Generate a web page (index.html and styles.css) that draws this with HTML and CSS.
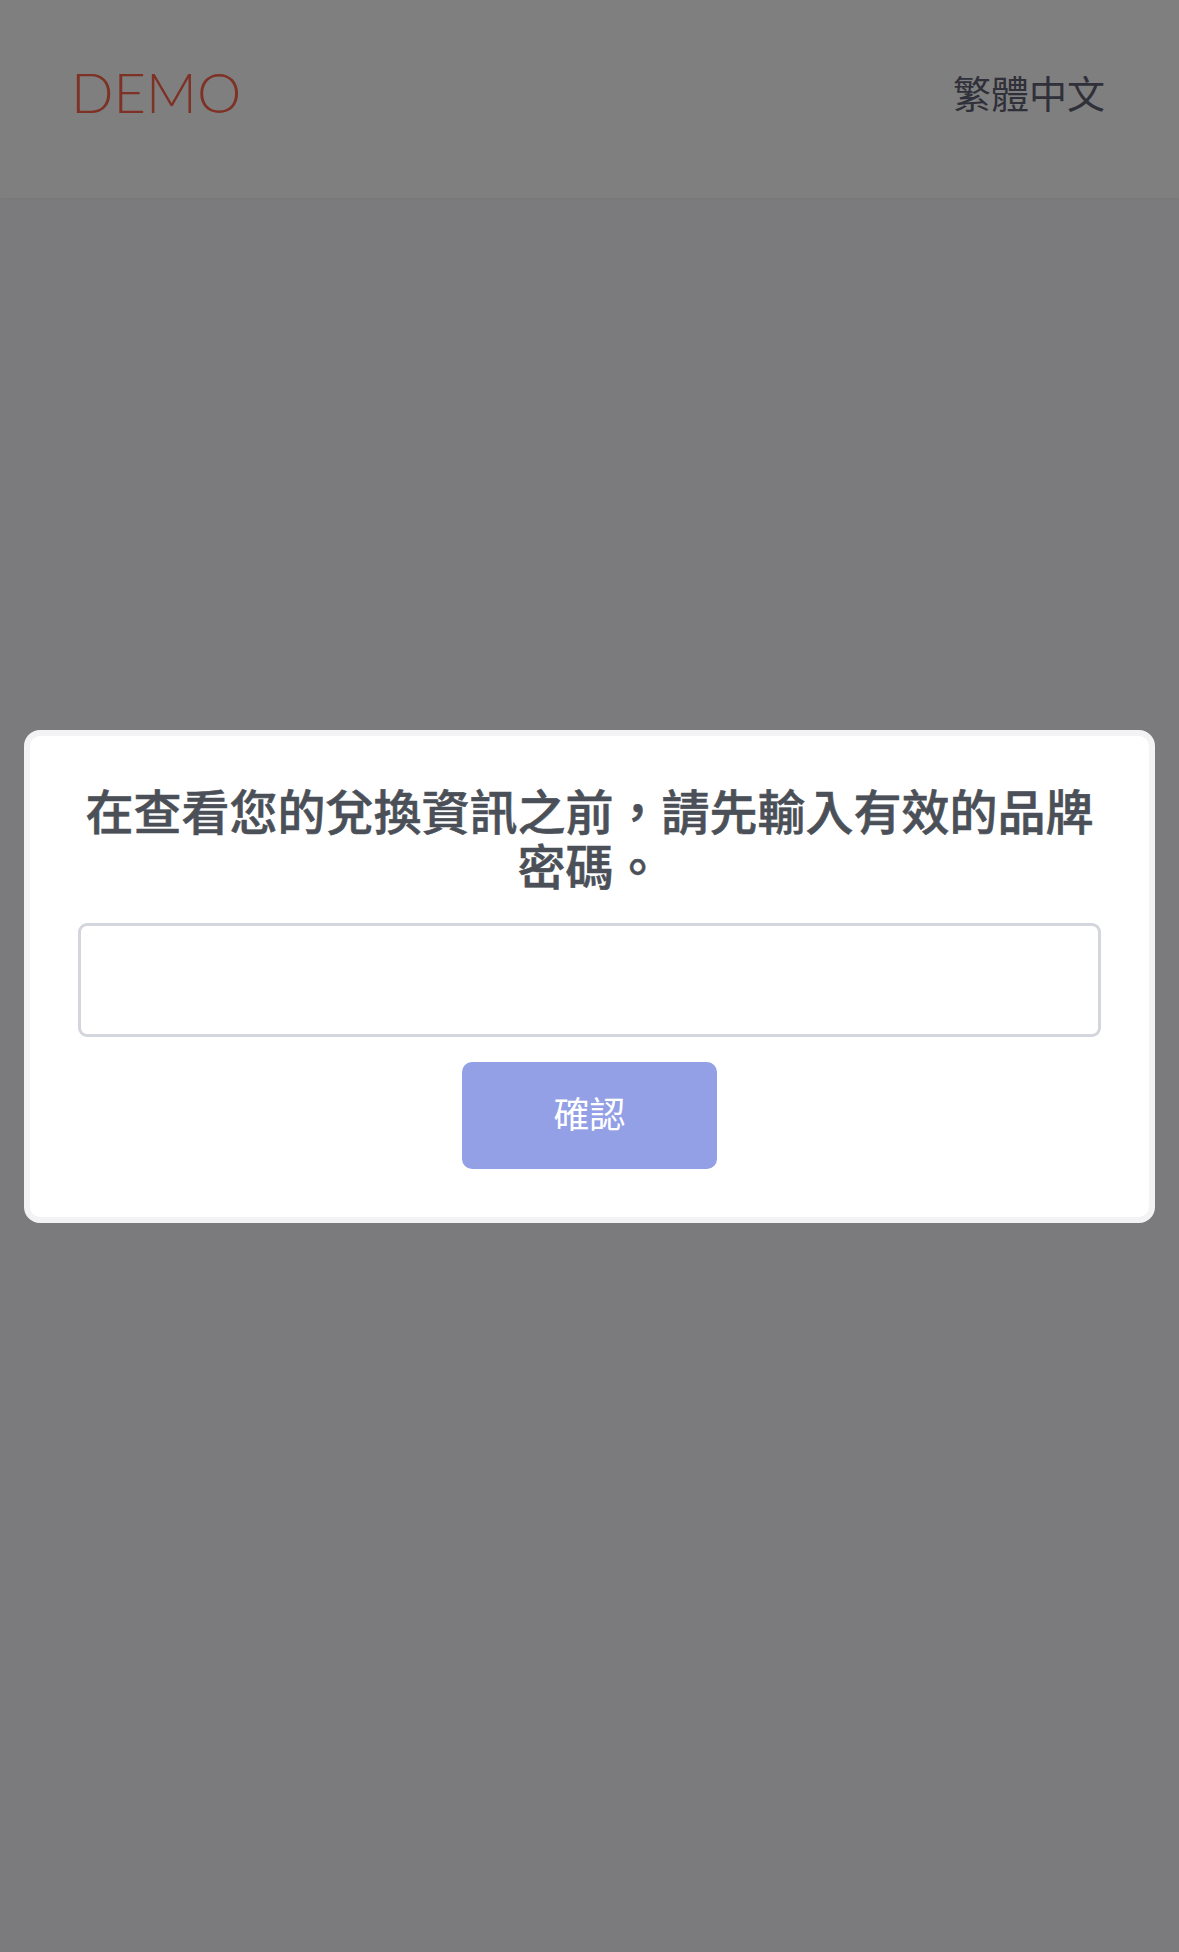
FILE: index.html
```html
<!DOCTYPE html>
<html lang="zh-Hant">
<head>
    <meta charset="UTF-8">
    <meta name="viewport" content="width=device-width, initial-scale=1.0">
    <title>DEMO</title>
    <link rel="stylesheet" href="styles.css">
</head>
<body>

    <header class="topbar">
        <div class="logo">DEMO</div>
        <a class="lang" href="#">繁體中文</a>
    </header>

    <main class="page"></main>

    <div class="overlay">
        <form class="modal" onsubmit="return false;">
            <h2 class="modal-title">在查看您的兌換資訊之前，請先輸入有效的品牌密碼。</h2>
            <input class="modal-input" type="password" id="brandCode">
            <button class="modal-button" type="submit">確認</button>
        </form>
    </div>

</body>
</html>
```

FILE: styles.css
```css
body {
    margin: 0;
    min-height: 100vh;
    background-color: #f6f6fa;
    font-family: "Noto Sans CJK TC", "Noto Sans", sans-serif;
}

.topbar {
    height: 198px;
    box-sizing: border-box;
    padding: 0 74px 16px 71px;
    display: flex;
    justify-content: space-between;
    align-items: center;
    background-color: #fff;
    box-shadow: 0 1px 2px rgba(0, 0, 0, 0.02);
}

.logo {
    font-family: Lato, "Liberation Sans", sans-serif;
    font-weight: 300;
    font-size: 56px;
    color: #fc624a;
}

.lang {
    font-size: 38px;
    color: #5e6072;
    text-decoration: none;
}

.overlay {
    position: fixed;
    inset: 0;
    padding: 0 24px;
    display: flex;
    align-items: center;
    background-color: rgba(0, 0, 0, 0.5);
}

.modal {
    width: 100%;
    box-sizing: border-box;
    padding: 46px 48px 48px;
    border: 6px solid #f3f3f5;
    border-radius: 16px;
    background-color: #fff;
    display: flex;
    flex-direction: column;
    align-items: center;
}

.modal-title {
    margin: 0 0 31px;
    font-size: 48px;
    font-weight: 500;
    line-height: 55px;
    color: #4b5058;
    text-align: center;
    -webkit-text-stroke: 0.6px #4b5058;
}

.modal-input {
    width: 100%;
    height: 114px;
    box-sizing: border-box;
    margin: 0 0 25px;
    padding: 0 24px;
    border: 3px solid #d3d6dd;
    border-radius: 9px;
    font-size: 36px;
    outline: none;
}

.modal-button {
    width: 255px;
    height: 107px;
    padding: 0 0 6px;
    border: none;
    border-radius: 10px;
    background-color: #94a0e6;
    color: #fff;
    font-family: "Noto Sans CJK TC", sans-serif;
    font-size: 36px;
    cursor: pointer;
}
```
